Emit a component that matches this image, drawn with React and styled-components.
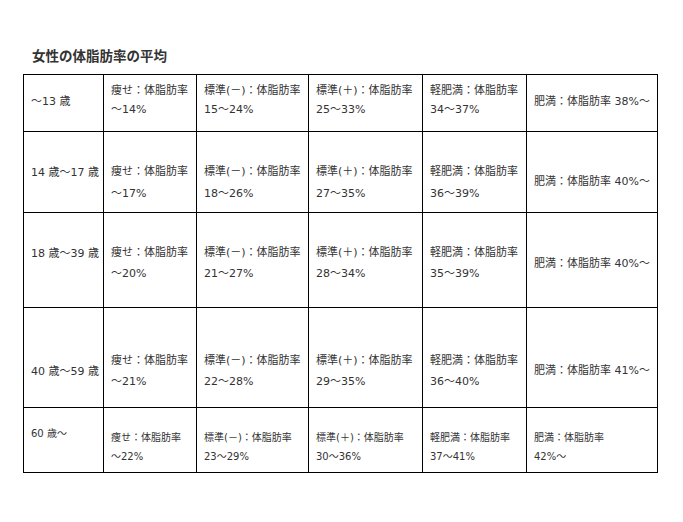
import React from "react";
import styled, { createGlobalStyle } from "styled-components";

const GlobalStyle = createGlobalStyle`
  html, body {
    margin: 0;
    padding: 0;
    background: #ffffff;
  }
  body {
    font-family: "DejaVu Sans", "Noto Sans CJK JP", sans-serif;
    color: #333333;
  }
`;

const Page = styled.div`
  width: 683px;
  height: 522px;
  padding: 45px 0 0 23px;
  box-sizing: border-box;
`;

const Title = styled.h2`
  margin: 0 0 9px 9px;
  height: 20px;
  font-family: "Noto Sans CJK JP", sans-serif;
  font-size: 13.5px;
  line-height: 20px;
  font-weight: 700;
  color: #333333;
`;

const Table = styled.table`
  border-collapse: collapse;
  table-layout: fixed;
  width: 634px;
`;

const Row = styled.tr`
  height: ${(p) => p.$h}px;
`;

const Cell = styled.td`
  border: 1px solid #000000;
  padding: ${(p) => p.$pt}px 4px 0 7px;
  vertical-align: top;
  font-size: ${(p) => p.$fs}px;
  line-height: ${(p) => p.$lh}px;
  color: #333333;
  white-space: nowrap;
  overflow: hidden;
`;

const Line = styled.div`
  display: block;
`;

const widths = [80, 93, 112, 114, 104, 131];

const labels = [
  "痩せ：体脂肪率",
  "標準(－)：体脂肪率",
  "標準(＋)：体脂肪率",
  "軽肥満：体脂肪率",
];

const rows = [
  {
    h: 57, fs: 11, lh: 19, age: "〜13 歳", agePt: 17, pairPt: 6, fatPt: 17,
    ranges: ["〜14%", "15〜24%", "25〜33%", "34〜37%"],
    fat: ["肥満：体脂肪率 38%〜"],
  },
  {
    h: 81, fs: 11, lh: 22, age: "14 歳〜17 歳", agePt: 30, pairPt: 29, fatPt: 39,
    ranges: ["〜17%", "18〜26%", "27〜35%", "36〜39%"],
    fat: ["肥満：体脂肪率 40%〜"],
  },
  {
    h: 95, fs: 11, lh: 21, age: "18 歳〜39 歳", agePt: 30, pairPt: 29, fatPt: 40,
    ranges: ["〜20%", "21〜27%", "28〜34%", "35〜39%"],
    fat: ["肥満：体脂肪率 40%〜"],
  },
  {
    h: 100, fs: 11, lh: 21, age: "40 歳〜59 歳", agePt: 53, pairPt: 42, fatPt: 52,
    ranges: ["〜21%", "22〜28%", "29〜35%", "36〜40%"],
    fat: ["肥満：体脂肪率 41%〜"],
  },
  {
    h: 65, fs: 10, lh: 19, age: "60 歳〜", agePt: 16, pairPt: 20, fatPt: 20,
    ranges: ["〜22%", "23〜29%", "30〜36%", "37〜41%"],
    fat: ["肥満：体脂肪率", "42%〜"],
  },
];

export default function App() {
  return (
    <>
      <GlobalStyle />
      <Page>
        <Title>女性の体脂肪率の平均</Title>
        <Table>
          <colgroup>
            {widths.map((w, i) => (
              <col key={i} style={{ width: w }} />
            ))}
          </colgroup>
          <tbody>
            {rows.map((r, ri) => (
              <Row key={ri} $h={r.h}>
                <Cell $pt={r.agePt} $fs={r.fs} $lh={r.lh}>
                  {r.age}
                </Cell>
                {labels.map((label, i) => (
                  <Cell key={i} $pt={r.pairPt} $fs={r.fs} $lh={r.lh}>
                    <Line>{label}</Line>
                    <Line>{r.ranges[i]}</Line>
                  </Cell>
                ))}
                <Cell $pt={r.fatPt} $fs={r.fs} $lh={r.lh}>
                  {r.fat.map((t, i) => (
                    <Line key={i}>{t}</Line>
                  ))}
                </Cell>
              </Row>
            ))}
          </tbody>
        </Table>
      </Page>
    </>
  );
}
